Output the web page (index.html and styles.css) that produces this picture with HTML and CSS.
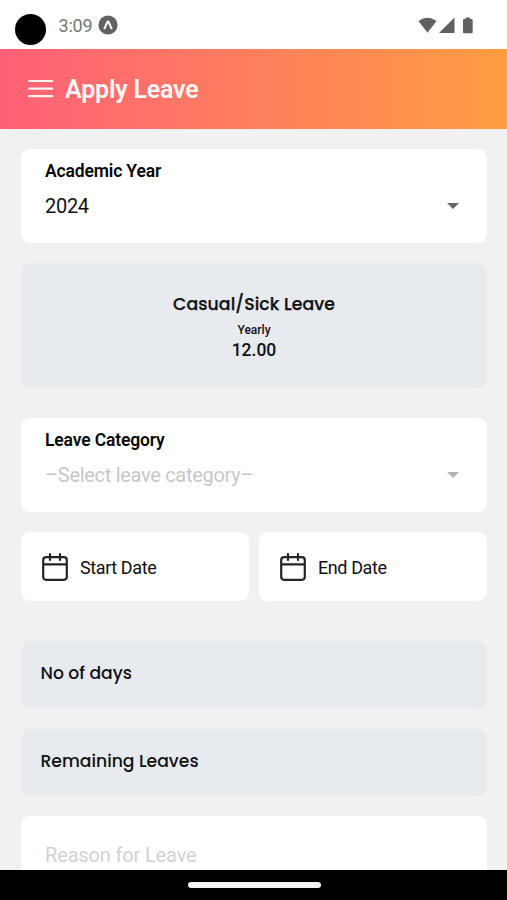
FILE: index.html
```html
<!DOCTYPE html>
<html lang="en">
<head>
<meta charset="utf-8">
<title>Apply Leave</title>
<link rel="stylesheet" href="styles.css">
</head>
<body>
<div class="phone">
  <div class="status">
    <span class="camera"></span>
    <span class="clock">3:09</span>
    <svg class="expo" width="20" height="20" viewBox="0 0 20 20"><circle cx="10" cy="10" r="9.6" fill="#626262"/><path d="M6.500 13.300 9.200 7.300Q10 5.900 10.800 7.300L13.500 13.300" fill="none" stroke="#fff" stroke-width="2" stroke-linecap="round" stroke-linejoin="round"/></svg>
    <svg class="signals" width="56" height="18" viewBox="0 0 56 18"><g fill="#606060"><path d="M.5 4.1Q9.5-2.7 18.5 4.1L9.5 15.8Z"/><path d="M21 16 36.500 .5V16Z"/><path d="M47.500.5H52V2H53.500Q54.700 2 54.700 3.200V15Q54.700 16.200 53.500 16.200H46.200Q45 16.200 45 15V3.200Q45 2 46.200 2H47.500Z"/></g></svg>
  </div>
  <header class="header">
    <svg width="26" height="20" viewBox="0 0 26 20"><path d="M1.200 2H24.200M1.200 9.700H24.200M1.200 17.200H24.200" stroke="#fff" stroke-opacity=".9" stroke-width="2.200" stroke-linecap="round"/></svg>
    <h1>Apply Leave</h1>
  </header>
  <main class="content">
    <section class="card select">
      <span class="label">Academic Year</span>
      <div class="value"><span>2024</span><i class="caret"></i></div>
    </section>
    <section class="panel summary">
      <span class="leave-type">Casual/Sick Leave</span>
      <span class="period">Yearly</span>
      <span class="amount">12.00</span>
    </section>
    <section class="card select category">
      <span class="label">Leave Category</span>
      <div class="value placeholder"><span>–Select leave category–</span><i class="caret"></i></div>
    </section>
    <div class="dates">
      <div class="card date">
        <svg width="26" height="28" viewBox="0 0 26 28"><path d="M4.200 4.200H21.800Q24.800 4.200 24.800 7.200V23.800Q24.800 26.800 21.800 26.800H4.200Q1.200 26.800 1.200 23.800V7.200Q1.200 4.200 4.200 4.200ZM1.200 11.300H24.800M8 1.200V7M18 1.200V7" fill="none" stroke="#242424" stroke-width="2.200" stroke-linecap="round"/></svg>
        <span>Start Date</span>
      </div>
      <div class="card date">
        <svg width="26" height="28" viewBox="0 0 26 28"><path d="M4.200 4.200H21.800Q24.800 4.200 24.800 7.200V23.800Q24.800 26.800 21.800 26.800H4.200Q1.200 26.800 1.200 23.800V7.200Q1.200 4.200 4.200 4.200ZM1.200 11.300H24.800M8 1.200V7M18 1.200V7" fill="none" stroke="#242424" stroke-width="2.200" stroke-linecap="round"/></svg>
        <span>End Date</span>
      </div>
    </div>
    <section class="panel info days"><span>No of days</span></section>
    <section class="panel info remaining"><span>Remaining Leaves</span></section>
    <section class="card reason"><span>Reason for Leave</span></section>
  </main>
  <div class="navbar"><span class="handle"></span></div>
</div>
</body>
</html>
```
FILE: styles.css
```css
* { box-sizing: border-box; }
body { margin: 0; font-family: Roboto, sans-serif; color: #111; }
svg { display: block; flex: none; }
span { white-space: nowrap; }
.phone { width: 507px; height: 900px; display: flex; flex-direction: column; overflow: hidden; background: #f1f1f1; }
.status { height: 48.5px; flex: none; display: flex; align-items: flex-start; background: #fff; padding: 14px 33px 0 15px; }
.camera { width: 31px; height: 31px; border-radius: 50%; background: #000; }
.clock { margin: 1px 0 0 12.5px; width: 34px; font-size: 18px; line-height: 22px; letter-spacing: -.2px; color: #777; }
.expo { margin: 1px 0 0 5.5px; }
.signals { margin: 2.5px 0 0 auto; }
.header { height: 80px; flex: none; display: flex; align-items: center; gap: 11.5px; padding: 0 27.5px; background: linear-gradient(90deg, #ff6078, #ff9d42); }
h1 { margin: 3px 0 0; font-size: 25px; line-height: 30px; font-weight: 600; letter-spacing: -.2px; color: #fff8f6; }
.content { flex: 1; min-height: 0; overflow: hidden; padding: 20px 20px 0 21px; display: flex; flex-direction: column; }
.card { background: #fff; border-radius: 9px; flex: none; }
.panel { background: #e7eaef; border-radius: 9px; flex: none; font-family: Poppins, Inter, sans-serif; }
.select { height: 94px; padding: 12px 28px 0 24px; }
.label { display: block; font-size: 17.5px; line-height: 21px; font-weight: 600; letter-spacing: -.15px; color: #080808; }
.value { display: flex; align-items: center; justify-content: space-between; margin-top: 12px; font-size: 20px; line-height: 24px; letter-spacing: -.3px; }
.placeholder { color: #c7c7c9; }
.caret { border: 6px solid transparent; border-top-color: #666; border-bottom: 0; }
.placeholder .caret { border-top-color: #b4b4b4; }
.summary { height: 125px; margin-top: 20px; padding-top: 28px; display: flex; flex-direction: column; align-items: center; }
.leave-type { font-size: 17.3px; line-height: 27px; font-weight: 500; letter-spacing: .06px; -webkit-text-stroke: .25px; }
.period { font: 500 12px/16px Roboto, sans-serif; margin-top: 4px; }
.amount { font: 500 17.5px/22px Roboto, sans-serif; margin-top: 1px; }
.category { margin-top: 30.5px; }
.dates { display: grid; grid-template-columns: 1fr 1fr; gap: 10px; margin-top: 20px; flex: none; }
.date { height: 69px; display: flex; align-items: center; gap: 12px; padding-left: 21px; font-size: 18px; line-height: 22px; letter-spacing: -.4px; }
.date span { margin-top: 2px; }
.info { height: 67.5px; padding: 19px 19.5px; font-size: 17.2px; line-height: 26px; font-weight: 500; }
.days { margin-top: 40px; }
.remaining { margin-top: 20px; }
.reason { height: 110px; margin-top: 19.5px; padding: 27px 24px; font-size: 20px; line-height: 24px; letter-spacing: -.15px; color: #d2d2d2; }
.navbar { height: 30px; flex: none; background: #000; display: flex; justify-content: center; padding: 12px 0 0 1px; }
.handle { width: 133px; height: 6px; border-radius: 3px; background: #f3f3f3; }
```
